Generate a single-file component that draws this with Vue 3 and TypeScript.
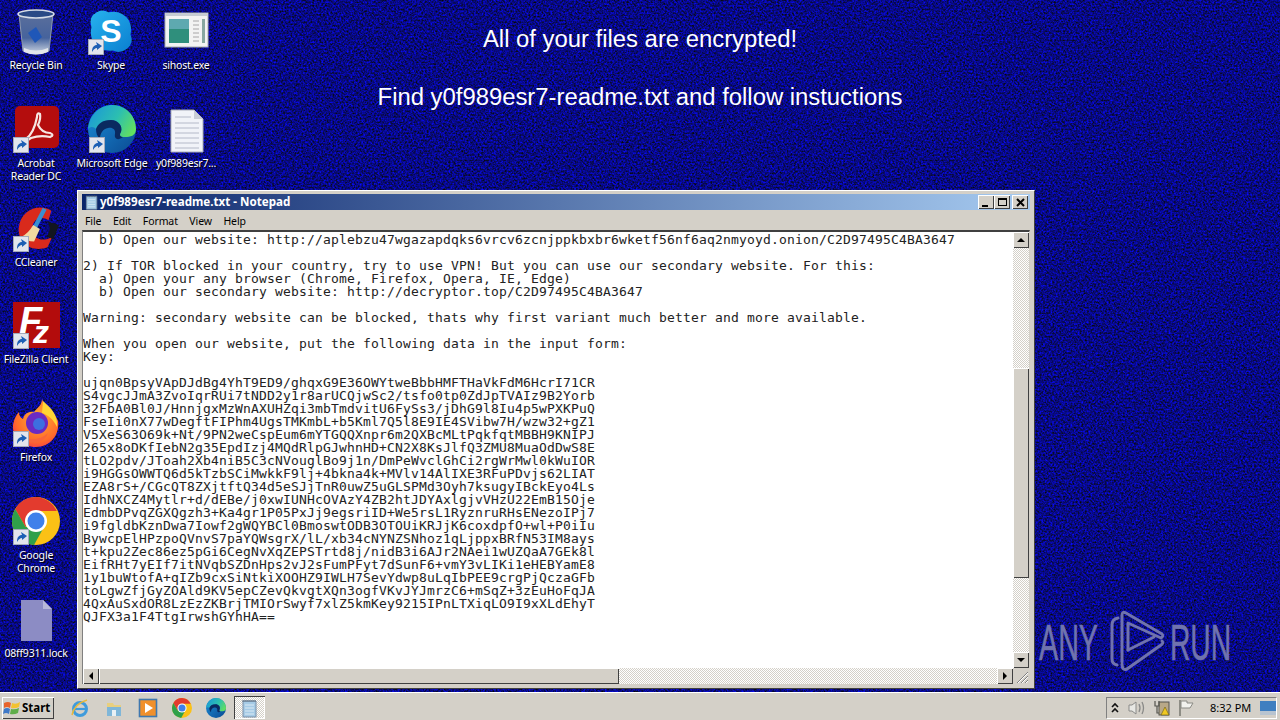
<template>
  <div class="screen">
    <!-- shared icon shapes -->
    <svg class="defs" width="0" height="0" aria-hidden="true">
      <defs>
        <linearGradient id="edgeA" x1="0" y1="0.3" x2="1" y2="0.7">
          <stop offset="0" stop-color="#1c9ad6" />
          <stop offset="0.55" stop-color="#2cbfb0" />
          <stop offset="1" stop-color="#63e05e" />
        </linearGradient>
        <linearGradient id="edgeB" x1="0" y1="0" x2="1" y2="1">
          <stop offset="0" stop-color="#1b8fd8" />
          <stop offset="1" stop-color="#0b4a92" />
        </linearGradient>
        <linearGradient id="binG" x1="0" y1="0" x2="0" y2="1">
          <stop offset="0" stop-color="#5a6f9c" />
          <stop offset="0.6" stop-color="#46639c" />
          <stop offset="1" stop-color="#d0d8e4" />
        </linearGradient>
        <linearGradient id="skypeG" x1="0" y1="0" x2="1" y2="1">
          <stop offset="0" stop-color="#27b2ee" />
          <stop offset="1" stop-color="#0a7fd0" />
        </linearGradient>
        <radialGradient id="foxG" cx="0.55" cy="0.4" r="0.7">
          <stop offset="0" stop-color="#ffb02e" />
          <stop offset="0.7" stop-color="#ff6a2b" />
          <stop offset="1" stop-color="#ef2f55" />
        </radialGradient>
      </defs>

      <symbol id="i-bin" viewBox="0 0 48 48">
        <path d="M7 7 L11 44 Q24 50 37 44 L41 7 Z" fill="url(#binG)" stroke="#8e9ab0" />
        <ellipse cx="24" cy="7" rx="18" ry="4" fill="#2a4a86" stroke="#d6dce6" stroke-width="1.6" />
        <path d="M16 26 L24 20 L30 30 L23 36 Z" fill="#1f57b8" />
        <path d="M12 41 Q24 46 36 41 L36 45 Q24 50 12 45 Z" fill="#e3e6ea" />
      </symbol>

      <symbol id="i-skype" viewBox="-3 -3 54 54">
        <path d="M14 1 Q18 1 21 3 Q36 0 44 12 Q48 20 46 28 Q50 38 42 44 Q34 50 26 46 Q10 48 3 34 Q0 26 2 20 Q-2 8 8 3 Q11 1 14 1 Z" fill="url(#skypeG)" />
      </symbol>

      <symbol id="i-app" viewBox="0 0 48 48">
        <rect x="3" y="6" width="43" height="34" fill="#f2f3f2" stroke="#a8aeb0" />
        <rect x="3" y="6" width="43" height="3" fill="#c6ccd2" />
        <rect x="7" y="12" width="20" height="24" fill="#2f8f7c" />
        <rect x="7" y="12" width="20" height="10" fill="#5ea9b0" />
        <path d="M31 14 H37 M31 18 H37 M31 22 H37 M31 26 H37 M31 30 H37 M31 34 H37" stroke="#a6a6a6" />
        <rect x="40" y="12" width="3" height="24" fill="#87a8a0" />
      </symbol>

      <symbol id="i-pdf" viewBox="0 0 48 48">
        <rect x="3" y="1" width="44" height="42" rx="5" fill="#b40d0d" />
        <path d="M14 34 Q22 28 25 12 Q25 7 28 9 Q29 14 26 20 Q30 28 38 28 Q43 30 38 32 Q28 30 19 33 Q13 37 14 34 Z" fill="none" stroke="#f6e7e2" stroke-width="2.2" />
      </symbol>

      <symbol id="i-edge" viewBox="0 0 48 48">
        <circle cx="24" cy="24" r="24" fill="url(#edgeB)" />
        <path d="M0 24 C2 8 14 0 24 0 C38 0 48 11 48 24 C48 31 42 32 37 32 C32 32 31 30 33 27 C35 21 30 15 23 15 C14 15 10 19 8 24 C6 22 3 21 0 24 Z" fill="url(#edgeA)" />
        <path d="M8 24 C10 19 14 15 23 15 C30 15 35 21 33 27 C31 30 32 32 35 32 C30 36 26 34 27 29 C28 24 24 22 20 23 C15 24 12 28 12 34 C9 31 8 28 8 24 Z" fill="#0a2a60" />
      </symbol>

      <symbol id="i-doc" viewBox="0 0 48 48">
        <path d="M9 5 H32 L41 14 V47 H9 Z" fill="#f1f3f8" stroke="#a9aebb" />
        <path d="M32 5 L41 14 H32 Z" fill="#c8ccd6" />
        <path d="M13 12 H29 M13 18 H37 M13 23 H37 M13 28 H37 M13 33 H37 M13 38 H37 M13 43 H37" stroke="#b4b9c8" />
      </symbol>

      <symbol id="i-ccleaner" viewBox="-3 -1 50 50">
        <path d="M38 6 C26 -2 6 4 4 24 C3 40 18 50 34 44 L39 33 C28 40 17 34 18 24 C19 14 28 11 35 16 Z" fill="#d92a1c" />
        <path d="M34 17 L46 21 L40 36 L33 32 C37 28 37 22 34 17 Z" fill="#12161f" />
        <path d="M29 3 L33 5 L23 24 L19 22 Z" fill="#3a8fd0" />
        <path d="M19 21 L26 25 L20 38 Q12 38 7 33 Q14 30 19 21 Z" fill="#f2d9a0" />
      </symbol>

      <symbol id="i-filezilla" viewBox="0 0 48 48">
        <rect x="1" y="1" width="47" height="46" fill="#b30c0c" />
      </symbol>

      <symbol id="i-firefox" viewBox="0 0 48 48">
        <path d="M30 0 C32 8 42 12 46 22 C48 36 38 48 24 48 C10 48 0 38 1 26 C2 20 4 16 7 13 C7 17 9 19 11 20 C12 14 18 12 22 13 C26 8 30 6 30 0 Z" fill="url(#foxG)" />
        <circle cx="25" cy="24" r="11" fill="#6b2ac2" />
        <circle cx="27" cy="25" r="6" fill="#3d6fe0" />
        <path d="M31 2 C40 10 46 16 45 28 C41 20 36 16 30 14 Z" fill="#ffd535" />
        <path d="M2 28 C8 42 26 44 36 34 C32 46 12 50 2 28 Z" fill="#f9653a" />
      </symbol>

      <symbol id="i-chrome" viewBox="0 0 48 48">
        <circle cx="24" cy="24" r="24" fill="#fbc116" />
        <path d="M24 0 A24 24 0 0 0 3.2 12 L13.6 30 L24 14 H44.8 A24 24 0 0 0 24 0 Z" fill="#e33b2e" />
        <path d="M3.2 12 A24 24 0 0 0 22 47.9 L32 30 L13.6 30 Z" fill="#2fa04a" />
        <circle cx="24" cy="24" r="11" fill="#fff" />
        <circle cx="24" cy="24" r="8.5" fill="#3f80ea" />
      </symbol>

      <symbol id="i-lock" viewBox="0 0 48 48">
        <path d="M9 5 H31 L40 14 V46 H9 Z" fill="#8c8cc4" />
        <path d="M31 5 L40 14 H31 Z" fill="#b8b8d8" />
      </symbol>

      <symbol id="i-arrow" viewBox="0 0 16 16">
        <rect x="0.5" y="0.5" width="15" height="15" fill="#e2e5ec" stroke="#a4aaba" />
        <path d="M4 13 C4 8 6 6 9 6 L8 3 L14 7 L9 11 L9 9 C7 9 6 10 4 13 Z" fill="#1c5fb4" />
      </symbol>

      <symbol id="i-notepad" viewBox="0 0 20 20">
        <path d="M3 3 H16 V19 H3 Z" fill="#a6cbe6" stroke="#7a8ea6" />
        <path d="M3 2 V4 M5 2 V4 M7 2 V4 M9 2 V4 M11 2 V4 M13 2 V4 M15 2 V4" stroke="#5d6e80" />
        <path d="M5 7 H14 M5 10 H14 M5 13 H14 M5 16 H14" stroke="#dbeaf4" />
      </symbol>
    </svg>

    <main class="desktop">
      <div class="wallpaper">
        <svg width="1280" height="692">
          <filter id="noise" x="0" y="0" width="100%" height="100%" color-interpolation-filters="sRGB">
            <feTurbulence type="fractalNoise" baseFrequency="0.55" numOctaves="2" seed="7" />
            <feColorMatrix
              type="matrix"
              values="0 0 0 0 0.03  0 0 0 0 0.04  1.5 0 0 0 -0.24  0 0 0 0 1"
            />
          </filter>
          <rect width="1280" height="692" filter="url(#noise)" />
        </svg>
      </div>

      <div class="banner">
        <p>All of your files are encrypted!</p>
        <p>Find y0f989esr7-readme.txt and follow instuctions</p>
      </div>

      <div
        v-for="item in desktopIcons"
        :key="item.label"
        class="desk-icon"
        :style="{ left: item.x - 38 + 'px', top: item.y + 'px' }"
      >
        <div class="desk-glyph">
          <svg width="48" height="48" viewBox="0 0 48 48">
            <use :href="'#i-' + item.icon" width="48" height="48" />
            <text v-if="item.icon === 'skype'" x="24" y="34.5" text-anchor="middle" class="skype-s">S</text>
            <template v-if="item.icon === 'filezilla'">
              <text x="7" y="33" class="fz-f">F</text>
              <text x="21" y="42" class="fz-z">z</text>
            </template>
          </svg>
          <svg v-if="item.shortcut" class="desk-arrow" width="16" height="16"><use href="#i-arrow" /></svg>
        </div>
        <div class="desk-label">{{ item.label }}</div>
      </div>

      <svg class="watermark" width="196" height="68" viewBox="1038 606 196 68">
        <text x="1039" y="659.5" textLength="59" lengthAdjust="spacingAndGlyphs" class="wm-text">ANY</text>
        <text x="1170" y="659.5" textLength="61" lengthAdjust="spacingAndGlyphs" class="wm-text">RUN</text>
        <g fill="none" stroke="#7073ad" stroke-width="3" stroke-linejoin="round" stroke-linecap="round">
          <path d="M1118 618 Q1112 619 1112 625 V659 Q1112 664 1117 665" />
          <path d="M1122 662 V615 Q1122 611 1126 613 L1162 634 Q1164 636 1161 638 L1128 623 V650" />
          <path d="M1128 650 L1154 637 M1162 641 Q1164 643 1161 645 L1127 669 Q1122 671 1122 664" />
        </g>
      </svg>

      <section class="notepad">
        <header class="titlebar">
          <svg width="16" height="16"><use href="#i-notepad" /></svg>
          <span class="title-text">y0f989esr7-readme.txt - Notepad</span>
          <div class="caption-buttons">
            <button class="caption-btn"><span class="cap-min"></span></button>
            <button class="caption-btn"><span class="cap-max"></span></button>
            <button class="caption-btn cap-close">
              <svg width="9" height="9" viewBox="0 0 9 9"><path d="M1 1 L8 8 M8 1 L1 8" stroke="#000" stroke-width="2" /></svg>
            </button>
          </div>
        </header>

        <nav class="menubar">
          <span v-for="m in menus" :key="m">{{ m }}</span>
        </nav>

        <div class="client">
          <pre class="editor">{{ noteText }}</pre>

          <div class="vscroll">
            <button class="sb-btn"><span class="tri tri-up"></span></button>
            <div class="sb-thumb v-thumb"></div>
            <div class="sb-fill"></div>
            <button class="sb-btn"><span class="tri tri-down"></span></button>
          </div>

          <div class="hscroll">
            <button class="sb-btn"><span class="tri tri-left"></span></button>
            <div class="sb-thumb h-thumb"></div>
            <div class="sb-fill"></div>
            <button class="sb-btn"><span class="tri tri-right"></span></button>
          </div>

          <div class="grip">
            <svg width="16" height="16" viewBox="0 0 16 16">
              <path d="M15 4 L4 15 M15 8 L8 15 M15 12 L12 15" stroke="#808080" />
              <path d="M15 5 L5 15 M15 9 L9 15 M15 13 L13 15" stroke="#fff" />
            </svg>
          </div>
        </div>
      </section>
    </main>

    <footer class="taskbar">
      <button class="start">
        <svg width="18" height="16" viewBox="0 0 18 16">
          <path d="M1 3 Q5 1 8 3 L7 8 Q4 6 1 8 Z" fill="#e8632a" />
          <path d="M9 3 Q13 5 17 2 L16 7 Q12 9 8 8 Z" fill="#f2c230" />
          <path d="M1 9 Q4 7 7 9 L6 14 Q3 12 0 14 Z" fill="#3f79c8" />
          <path d="M8 9 Q12 10 16 8 L15 13 Q11 15 7 14 Z" fill="#5fae4a" />
        </svg>
        <span>Start</span>
      </button>

      <div class="quick">
        <svg width="20" height="20" viewBox="0 0 20 20">
          <circle cx="10" cy="11" r="6.5" fill="none" stroke="#3f9bdc" stroke-width="3" />
          <path d="M4 11 H16" stroke="#3f9bdc" stroke-width="2.2" />
          <path d="M2 17 Q4 6 17 2" fill="none" stroke="#e8b93a" stroke-width="1.4" />
        </svg>
        <svg width="20" height="20" viewBox="0 0 20 20">
          <path d="M3 5 H9 L10 7 H17 V18 H3 Z" fill="#e8cf7e" />
          <path d="M3 9 H17 V18 H3 Z" fill="#7fb6d8" />
          <rect x="8" y="12" width="4" height="6" fill="#e8f0f4" />
        </svg>
        <svg width="20" height="20" viewBox="0 0 20 20">
          <rect x="1.5" y="1.5" width="17" height="17" fill="#f0902c" stroke="#3f78b0" stroke-width="1.6" />
          <path d="M7 5 L15 10 L7 15 Z" fill="#fff" />
        </svg>
        <svg width="20" height="20"><use href="#i-chrome" /></svg>
        <svg width="20" height="20"><use href="#i-edge" /></svg>
      </div>

      <button class="task-btn">
        <svg width="20" height="20"><use href="#i-notepad" /></svg>
      </button>

      <div class="spacer"></div>

      <div class="tray">
        <svg width="10" height="12" viewBox="0 0 10 12">
          <path d="M2 5 L5 2 L8 5 M2 10 L5 7 L8 10" fill="none" stroke="#111" stroke-width="1.6" />
        </svg>
        <svg width="18" height="16" viewBox="0 0 18 16">
          <path d="M1 5 H4 L8 2 V14 L4 11 H1 Z" fill="#e8e8e4" stroke="#8a8a88" />
          <path d="M11 4 Q13 8 11 12 M14 2 Q17 8 14 14" fill="none" stroke="#8a8a88" stroke-width="1.3" />
        </svg>
        <svg width="16" height="18" viewBox="0 0 16 18">
          <rect x="5" y="3" width="10" height="13" fill="#b8a888" stroke="#55554f" />
          <path d="M1 2 V7 H5 V2 M3 7 V14 H5" fill="none" stroke="#55554f" stroke-width="1.2" />
          <path d="M11 8 L15 16 H7 Z" fill="#f0c820" stroke="#6a5a10" stroke-width="0.6" />
        </svg>
        <svg width="16" height="18" viewBox="0 0 16 18">
          <path d="M2 1 V17" stroke="#77776f" stroke-width="1.5" />
          <path d="M3 2 H9 L9 4 H15 L12 9 H3 Z" fill="#f2f2ee" stroke="#8a8a84" />
        </svg>
        <span class="clock">8:32 PM</span>
        <svg class="show-desktop" width="16" height="14" viewBox="0 0 16 14">
          <rect width="16" height="14" fill="#3f7fc0" />
          <rect y="10" width="16" height="4" fill="#b8c4d0" />
        </svg>
      </div>
    </footer>
  </div>
</template>

<script setup lang="ts">
interface DeskIcon {
  label: string;
  icon: string;
  x: number;
  y: number;
  shortcut?: boolean;
}

const desktopIcons: DeskIcon[] = [
  { label: 'Recycle Bin', icon: 'bin', x: 36, y: 7 },
  { label: 'Skype', icon: 'skype', x: 111, y: 7, shortcut: true },
  { label: 'sihost.exe', icon: 'app', x: 186, y: 7 },
  { label: 'Acrobat\nReader DC', icon: 'pdf', x: 36, y: 105, shortcut: true },
  { label: 'Microsoft Edge', icon: 'edge', x: 112, y: 105, shortcut: true },
  { label: 'y0f989esr7...', icon: 'doc', x: 186, y: 105 },
  { label: 'CCleaner', icon: 'ccleaner', x: 36, y: 204, shortcut: true },
  { label: 'FileZilla Client', icon: 'filezilla', x: 36, y: 301, shortcut: true },
  { label: 'Firefox', icon: 'firefox', x: 36, y: 399, shortcut: true },
  { label: 'Google\nChrome', icon: 'chrome', x: 36, y: 497, shortcut: true },
  { label: '08ff9311.lock', icon: 'lock', x: 36, y: 595 },
];

const menus = ['File', 'Edit', 'Format', 'View', 'Help'];

const noteText = `  b) Open our website: http://aplebzu47wgazapdqks6vrcv6zcnjppkbxbr6wketf56nf6aq2nmyoyd.onion/C2D97495C4BA3647

2) If TOR blocked in your country, try to use VPN! But you can use our secondary website. For this:
  a) Open your any browser (Chrome, Firefox, Opera, IE, Edge)
  b) Open our secondary website: http://decryptor.top/C2D97495C4BA3647

Warning: secondary website can be blocked, thats why first variant much better and more available.

When you open our website, put the following data in the input form:
Key:

ujqn0BpsyVApDJdBg4YhT9ED9/ghqxG9E36OWYtweBbbHMFTHaVkFdM6HcrI71CR
S4vgcJJmA3ZvoIqrRUi7tNDD2y1r8arUCQjwSc2/tsfo0tp0ZdJpTVAIz9B2Yorb
32FbA0Bl0J/HnnjgxMzWnAXUHZqi3mbTmdvitU6FySs3/jDhG9l8Iu4p5wPXKPuQ
FseIi0nX77wDegftFIPhm4UgsTMKmbL+b5Kml7Q5l8E9IE4SVibw7H/wzw32+gZ1
V5XeS63O69k+Nt/9PN2weCspEum6mYTGQQXnpr6m2QXBcMLtPqkfqtMBBH9KNIPJ
265x8oDKfIebN2g35EpdIzj4MQdRlpGJwhnHD+CN2X8KsJlfQ3ZMU8MuaOdDwS8E
tLO2pdv/JToah2Xb4niB5C3cNVouglBo9j1n/DmPeWvclGhCi2rgWrMwl0kWuIOR
i9HGGsOWWTQ6d5kTzbSCiMwkkF9lj+4bkna4k+MVlv14AlIXE3RFuPDvjs62LIAT
EZA8rS+/CGcQT8ZXjtftQ34d5eSJjTnR0uwZ5uGLSPMd3Oyh7ksugyIBckEyo4Ls
IdhNXCZ4Mytlr+d/dEBe/j0xwIUNHcOVAzY4ZB2htJDYAxlgjvVHzU22EmB15Oje
EdmbDPvqZGXQgzh3+Ka4gr1P05PxJj9egsriID+We5rsL1RyznruRHsENezoIPj7
i9fgldbKznDwa7Iowf2gWQYBCl0BmoswtODB3OTOUiKRJjK6coxdpfO+wl+P0iIu
BywcpElHPzpoQVnvS7paYQWsgrX/lL/xb34cNYNZSNhoz1qLjppxBRfN53IM8ays
t+kpu2Zec86ez5pGi6CegNvXqZEPSTrtd8j/nidB3i6AJr2NAei1wUZQaA7GEk8l
EifRHt7yEIf7itNVqbSZDnHps2vJ2sFumPFyt7dSunF6+vmY3vLIKi1eHEBYamE8
1y1buWtofA+qIZb9cxSiNtkiXOOHZ9IWLH7SevYdwp8uLqIbPEE9crgPjQczaGFb
toLgwZfjGyZOAld9KV5epCZevQkvgtXQn3ogfVKvJYJmrzC6+mSqZ+3zEuHoFqJA
4QxAuSxdOR8LzEzZKBrjTMIOrSwyf7xlZ5kmKey9215IPnLTXiqLO9I9xXLdEhyT
QJFX3a1F4TtgIrwshGYhHA==`;
</script>

<style>
html,
body {
  margin: 0;
  overflow: hidden;
}
</style>

<style scoped>
.screen {
  width: 1280px;
  height: 720px;
  display: flex;
  flex-direction: column;
  overflow: hidden;
  font-family: "Noto Sans", "DejaVu Sans", sans-serif;
  font-size: 11px;
}

.defs {
  position: absolute;
}

.skype-s {
  font-family: "Liberation Sans", sans-serif;
  font-weight: 700;
  font-size: 32px;
  fill: #fff;
}

.fz-f {
  font-family: "Liberation Sans", sans-serif;
  font-weight: 700;
  font-style: italic;
  font-size: 38px;
  fill: #fff;
}

.fz-z {
  font-family: "Liberation Sans", sans-serif;
  font-weight: 700;
  font-style: italic;
  font-size: 32px;
  fill: #fff;
}

.desktop {
  position: relative;
  flex: 1;
  min-height: 0;
  background: #0a0c78;
}

.wallpaper {
  position: absolute;
  inset: 0;
  line-height: 0;
}

.banner {
  position: relative;
  display: flex;
  flex-direction: column;
  align-items: center;
  gap: 30px;
  padding-top: 25px;
  color: #fff;
  font-family: "Liberation Sans", sans-serif;
  font-size: 23.85px;
  line-height: 28px;
}

.banner p {
  margin: 0;
}

.desk-icon {
  position: absolute;
  width: 76px;
  display: flex;
  flex-direction: column;
  align-items: center;
}

.desk-glyph {
  position: relative;
  width: 48px;
  height: 48px;
  line-height: 0;
}

.desk-arrow {
  position: absolute;
  left: 1px;
  bottom: 0;
}

.desk-label {
  margin-top: 4px;
  color: #fff;
  font-size: 10.5px;
  letter-spacing: -0.2px;
  line-height: 13px;
  text-align: center;
  text-shadow: 1px 1px 1px #000;
  white-space: pre;
}

.watermark {
  position: absolute;
  left: 1038px;
  top: 606px;
}

.wm-text {
  font-family: "Liberation Sans", sans-serif;
  font-size: 50px;
  fill: #7073ad;
  stroke: #7073ad;
  stroke-width: 0.6px;
}

.notepad {
  position: absolute;
  left: 77px;
  top: 190px;
  width: 958px;
  height: 499px;
  box-sizing: border-box;
  display: flex;
  flex-direction: column;
  padding: 3px 4px 4px;
  background: #d4d0c8;
  border-top: 1px solid #fff;
  border-left: 1px solid #fff;
  border-right: 1px solid #404040;
  border-bottom: 1px solid #404040;
}

.titlebar {
  height: 16px;
  flex: none;
  display: flex;
  align-items: center;
  padding-left: 2px;
  background: linear-gradient(90deg, #0a246a, #a6caf0);
  color: #fff;
}

.title-text {
  margin-top: -2px;
  font-weight: 700;
  font-size: 11.6px;
  font-family: "Noto Sans", sans-serif;
}

.caption-buttons {
  margin-left: auto;
  display: flex;
  padding-right: 2px;
}

.caption-btn {
  width: 16px;
  height: 14px;
  margin-left: 0;
  padding: 0;
  display: flex;
  align-items: center;
  justify-content: center;
  background: #d4d0c8;
  border: none;
  box-shadow: inset 1px 1px 0 #fff, inset -1px -1px 0 #404040;
}

.cap-close {
  margin-left: 2px;
}

.cap-min {
  width: 6px;
  height: 2px;
  margin-top: 7px;
  margin-right: 2px;
  background: #000;
}

.cap-max {
  width: 9px;
  height: 8px;
  box-sizing: border-box;
  border: 1px solid #000;
  border-top-width: 2px;
}

.menubar {
  height: 20px;
  flex: none;
  box-sizing: border-box;
  display: flex;
  align-items: center;
  gap: 11.5px;
  padding: 2px 0 0 3px;
  color: #000;
  font-size: 10.5px;
  letter-spacing: -0.1px;
}

.client {
  flex: 1;
  min-height: 0;
  display: grid;
  grid-template-columns: 1fr 16px;
  grid-template-rows: 1fr 16px;
  border-top: 2px solid #404040;
  border-left: 1px solid #808080;
  border-right: 1px solid #d4d0c8;
  background: #fff;
}

.editor {
  margin: 0;
  padding: 1px 0 0;
  overflow: hidden;
  background: #fff;
  color: #222;
  font-family: "DejaVu Sans Mono", "Liberation Mono", monospace;
  font-size: 13px;
  letter-spacing: 0.174px;
  line-height: 13px;
  white-space: pre;
}

.vscroll,
.hscroll {
  display: flex;
  background: repeating-conic-gradient(#d4d0c8 0 25%, #fff 0 50%) 0 0 / 2px 2px;
}

.vscroll {
  flex-direction: column;
}

.sb-btn,
.sb-thumb {
  background: #d4d0c8;
  border: none;
  padding: 0;
  box-shadow: inset 1px 1px 0 #fff, inset -1px -1px 0 #404040;
}

.sb-btn {
  flex: none;
  width: 16px;
  height: 16px;
  display: flex;
  align-items: center;
  justify-content: center;
}

.sb-fill {
  flex: 1;
}

.v-thumb {
  margin-top: 120px;
  height: 210px;
  flex: none;
}

.h-thumb {
  width: 520px;
  flex: none;
}

.tri {
  width: 0;
  height: 0;
  border: 4px solid transparent;
}

.tri-up {
  border-bottom-color: #000;
  margin-top: -4px;
}

.tri-down {
  border-top-color: #000;
  margin-top: 4px;
}

.tri-left {
  border-right-color: #000;
  margin-left: -4px;
}

.tri-right {
  border-left-color: #000;
  margin-left: 4px;
}

.grip {
  background: #d4d0c8;
  line-height: 0;
}

.taskbar {
  height: 28px;
  flex: none;
  box-sizing: border-box;
  display: flex;
  align-items: center;
  padding: 2px 3px 0 2px;
  background: #d4d0c8;
  border-top: 1px solid #fff;
}

.start {
  width: 52px;
  height: 22px;
  flex: none;
  display: flex;
  align-items: center;
  gap: 1px;
  padding: 0 0 0 1px;
  background: #d4d0c8;
  border: none;
  box-shadow: inset 1px 1px 0 #fff, inset -1px -1px 0 #404040;
  color: #000;
  font-family: "Noto Sans", sans-serif;
  font-size: 11.5px;
  font-weight: 700;
}

.quick {
  display: flex;
  gap: 14px;
  margin-left: 16px;
  line-height: 0;
}

.task-btn {
  width: 31px;
  height: 23px;
  margin-left: 8px;
  padding: 0;
  display: flex;
  align-items: center;
  justify-content: center;
  background: repeating-conic-gradient(#d4d0c8 0 25%, #fff 0 50%) 0 0 / 2px 2px;
  border: none;
  box-shadow: inset 1px 1px 0 #404040, inset -1px -1px 0 #fff;
}

.spacer {
  flex: 1;
}

.tray {
  width: 171px;
  height: 22px;
  box-sizing: border-box;
  display: flex;
  align-items: center;
  padding: 0 0 0 3px;
  gap: 8px;
  border-top: 1px solid #808080;
  border-left: 1px solid #808080;
  border-right: 1px solid #fff;
  border-bottom: 1px solid #fff;
}

.clock {
  margin-left: 8px;
  color: #000;
  font-size: 11px;
  white-space: nowrap;
}

.show-desktop {
  margin-left: auto;
}
</style>
